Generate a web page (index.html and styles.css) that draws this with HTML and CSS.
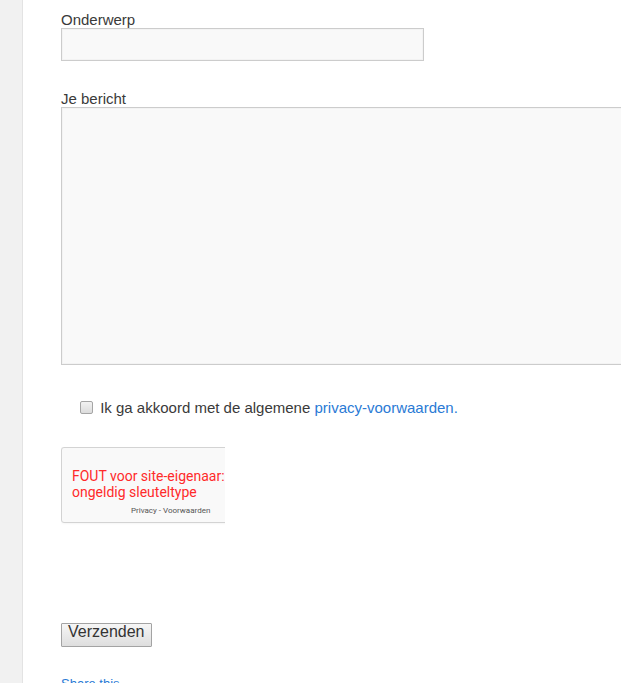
FILE: index.html
```html
<!DOCTYPE html>
<html lang="nl">
<head>
<meta charset="utf-8">
<title>Contact</title>
<link rel="stylesheet" href="styles.css">
</head>
<body>
<div class="page">
  <aside class="sidebar"></aside>
  <main class="content">
    <form class="form">
      <label class="label" for="subject">Onderwerp</label>
      <input class="field" id="subject" type="text">

      <label class="label label-msg" for="msg">Je bericht</label>
      <textarea class="area" id="msg"></textarea>

      <div class="consent">
        <input class="check" type="checkbox" id="agree">
        <label for="agree">Ik ga akkoord met de algemene <a class="link" href="#">privacy-voorwaarden.</a></label>
      </div>

      <div class="captcha-clip">
        <div class="captcha">
          <div class="captcha-error">FOUT voor site-eigenaar:<br>ongeldig sleuteltype</div>
          <div class="captcha-links">Privacy - Voorwaarden</div>
        </div>
      </div>

      <button class="submit" type="button">Verzenden</button>
    </form>
    <a class="share" href="#">Share this</a>
  </main>
</div>
</body>
</html>
```

FILE: styles.css
```css
html, body {
  margin: 0;
  padding: 0;
  height: 683px;
  overflow: hidden;
  background: #ffffff;
}

.page {
  display: flex;
  height: 683px;
}

.sidebar {
  flex: 0 0 22px;
  background: #f1f1f1;
  border-right: 1px solid #e3e3e3;
}

.content {
  flex: 1;
  min-width: 0;
  overflow: hidden;
  padding: 11px 0 0 38px;
  font-family: "Liberation Sans", Arial, sans-serif;
  font-size: 15px;
  color: #3a3a3a;
}

.form {
  display: flex;
  flex-direction: column;
  align-items: flex-start;
}

.label {
  display: block;
  line-height: 17px;
}

.label-msg {
  margin-top: 29px;
}

.field {
  box-sizing: border-box;
  width: 363px;
  height: 33px;
  margin: 0;
  border: 1px solid #cccccc;
  background: #f9f9f9;
  box-shadow: inset 0 0 0 1px #f3f3f3;
  padding: 0 6px;
  font: inherit;
}

.area {
  box-sizing: border-box;
  width: 620px;
  height: 258px;
  margin: 0;
  border: 1px solid #cccccc;
  background: #f9f9f9;
  box-shadow: inset 0 0 0 1px #f3f3f3;
  resize: none;
  font: inherit;
}

.consent {
  margin-top: 33px;
  padding-left: 15px;
  line-height: 20px;
}

.check {
  appearance: none;
  -webkit-appearance: none;
  box-sizing: border-box;
  width: 13px;
  height: 13px;
  margin: 3px 3px 3px 4px;
  vertical-align: -4px;
  border: 1px solid #a5a5a5;
  border-radius: 2px;
  background: linear-gradient(#f2f2f2, #dcdcdc);
}

.link {
  color: #2a7ad5;
  text-decoration: none;
}

.captcha-clip {
  margin-top: 29px;
  width: 164px;
  height: 78px;
  overflow: hidden;
}

.captcha {
  box-sizing: border-box;
  width: 304px;
  height: 76px;
  border: 1px solid #d3d3d3;
  border-radius: 3px;
  background: #f9f9f9;
  box-shadow: 0 0 3px 0 rgba(0, 0, 0, 0.08);
  padding: 20px 0 0 10px;
  font-family: Roboto, "Liberation Sans", sans-serif;
}

.captcha-error {
  font-size: 14px;
  line-height: 16px;
  color: #ff2a2a;
  white-space: nowrap;
}

.captcha-links {
  margin-top: 6px;
  padding-left: 59px;
  font-size: 8px;
  line-height: 10px;
  color: #555555;
}

.submit {
  margin-top: 98px;
  height: 24px;
  padding: 0 6px 6px;
  line-height: 16px;
  border: 1px solid #a3a3a3;
  border-radius: 1px;
  background: linear-gradient(#f6f6f6, #dedede);
  font-family: "Liberation Sans", Arial, sans-serif;
  font-size: 16px;
  color: #333333;
}

.share {
  display: block;
  margin-top: 28px;
  font-size: 13px;
  line-height: 17px;
  color: #2a7ad5;
  text-decoration: none;
}
```
